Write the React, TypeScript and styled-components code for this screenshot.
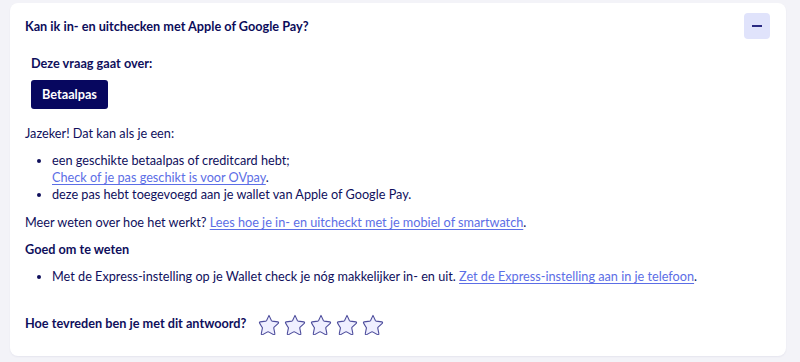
import React from "react";
import styled, { createGlobalStyle } from "styled-components";

const GlobalStyle = createGlobalStyle`
    html, body {
        margin: 0;
        padding: 0;
        background: #f3f3f8;
    }
    body {
        font-family: Lato, "Open Sans", sans-serif;
        font-size: 12.7px;
        line-height: 17px;
        color: #0f0f5c;
    }
`;

const Page = styled.div`
    width: 800px;
    height: 362px;
    padding: 3px 14px 0 10px;
    box-sizing: border-box;
`;

const Card = styled.section`
    background: #fff;
    border-radius: 8px;
    padding: 10px 16px 21px 15px;
    box-shadow: 0 1px 2px rgba(20, 20, 80, 0.06);
`;

const Header = styled.div`
    display: flex;
    align-items: center;
    justify-content: space-between;
`;

const Question = styled.h2`
    margin: 0;
    font-size: 12.7px;
    line-height: 17px;
    font-weight: 700;
    color: #0c0c5a;
`;

const ToggleButton = styled.button`
    width: 26px;
    height: 26px;
    border: none;
    border-radius: 4px;
    background: #e0e3fb;
    display: flex;
    align-items: center;
    justify-content: center;
    padding: 0;
    cursor: pointer;
    &::after {
        content: "";
        width: 10px;
        height: 1.5px;
        background: #2a2a82;
    }
`;

const Topic = styled.div`
    display: flex;
    flex-direction: column;
    align-items: flex-start;
    gap: 7.5px;
    padding: 16px 6px 0;
`;

const TopicLabel = styled.div`
    font-weight: 700;
`;

const TopicTag = styled.span`
    padding: 6px 11px;
    background: #07075f;
    color: #fff;
    border-radius: 3px;
    font-weight: 700;
`;

const Body = styled.div`
    margin-top: 16.5px;
`;

const Para = styled.p<{ $gap?: number }>`
    margin: 0 0 ${(p) => p.$gap ?? 10}px;
`;

const List = styled.ul<{ $gap?: number }>`
    margin: 0 0 ${(p) => p.$gap ?? 11}px;
    padding-left: 27px;
`;

const Link = styled.a`
    color: #5c6ee6;
    text-decoration: underline;
    text-underline-offset: 2px;
`;

const SubHead = styled.h3`
    margin: 10px 0 10px;
    font-size: 12.7px;
    line-height: 17px;
    font-weight: 700;
`;

const Rating = styled.div`
    display: flex;
    align-items: center;
    gap: 12px;
    margin-top: 27.5px;
`;

const RatingLabel = styled.span`
    font-weight: 700;
`;

const Stars = styled.div`
    display: flex;
    gap: 4px;
`;

const Star = () => (
    <svg width="22" height="22" viewBox="0 0 24 24">
        <path
            d="M12 2.6l2.6 5.6c.2.4.5.6.9.7l6.1.8c.8.1 1.1 1.1.5 1.6l-4.5 4.2c-.3.3-.4.7-.4 1.1l1.2 6c.2.8-.7 1.4-1.4 1l-5.4-3c-.4-.2-.8-.2-1.2 0l-5.4 3c-.7.4-1.6-.2-1.4-1l1.2-6c.1-.4-.1-.8-.4-1.1L1.9 11.3c-.6-.5-.3-1.5.5-1.6l6.1-.8c.4-.1.7-.3.9-.7z"
            fill="#efefff"
            stroke="#4d4d9c"
            strokeWidth="1.2"
            strokeLinejoin="round"
        />
    </svg>
);

export default function App() {
    return (
        <Page>
            <GlobalStyle />
            <Card>
                <Header>
                    <Question>Kan ik in- en uitchecken met Apple of Google Pay?</Question>
                    <ToggleButton aria-label="Inklappen" />
                </Header>
                <Topic>
                    <TopicLabel>Deze vraag gaat over:</TopicLabel>
                    <TopicTag>Betaalpas</TopicTag>
                </Topic>
                <Body>
                    <Para>Jazeker! Dat kan als je een:</Para>
                    <List>
                        <li>
                            een geschikte betaalpas of creditcard hebt;
                            <br />
                            <Link href="#">Check of je pas geschikt is voor OVpay</Link>.
                        </li>
                        <li>deze pas hebt toegevoegd aan je wallet van Apple of Google Pay.</li>
                    </List>
                    <Para $gap={0}>
                        Meer weten over hoe het werkt?{" "}
                        <Link href="#">Lees hoe je in- en uitcheckt met je mobiel of smartwatch</Link>.
                    </Para>
                    <SubHead>Goed om te weten</SubHead>
                    <List $gap={0}>
                        <li>
                            Met de Express-instelling op je Wallet check je nóg makkelijker in- en uit.{" "}
                            <Link href="#">Zet de Express-instelling aan in je telefoon</Link>.
                        </li>
                    </List>
                </Body>
                <Rating>
                    <RatingLabel>Hoe tevreden ben je met dit antwoord?</RatingLabel>
                    <Stars>
                        {[0, 1, 2, 3, 4].map((i) => (
                            <Star key={i} />
                        ))}
                    </Stars>
                </Rating>
            </Card>
        </Page>
    );
}
